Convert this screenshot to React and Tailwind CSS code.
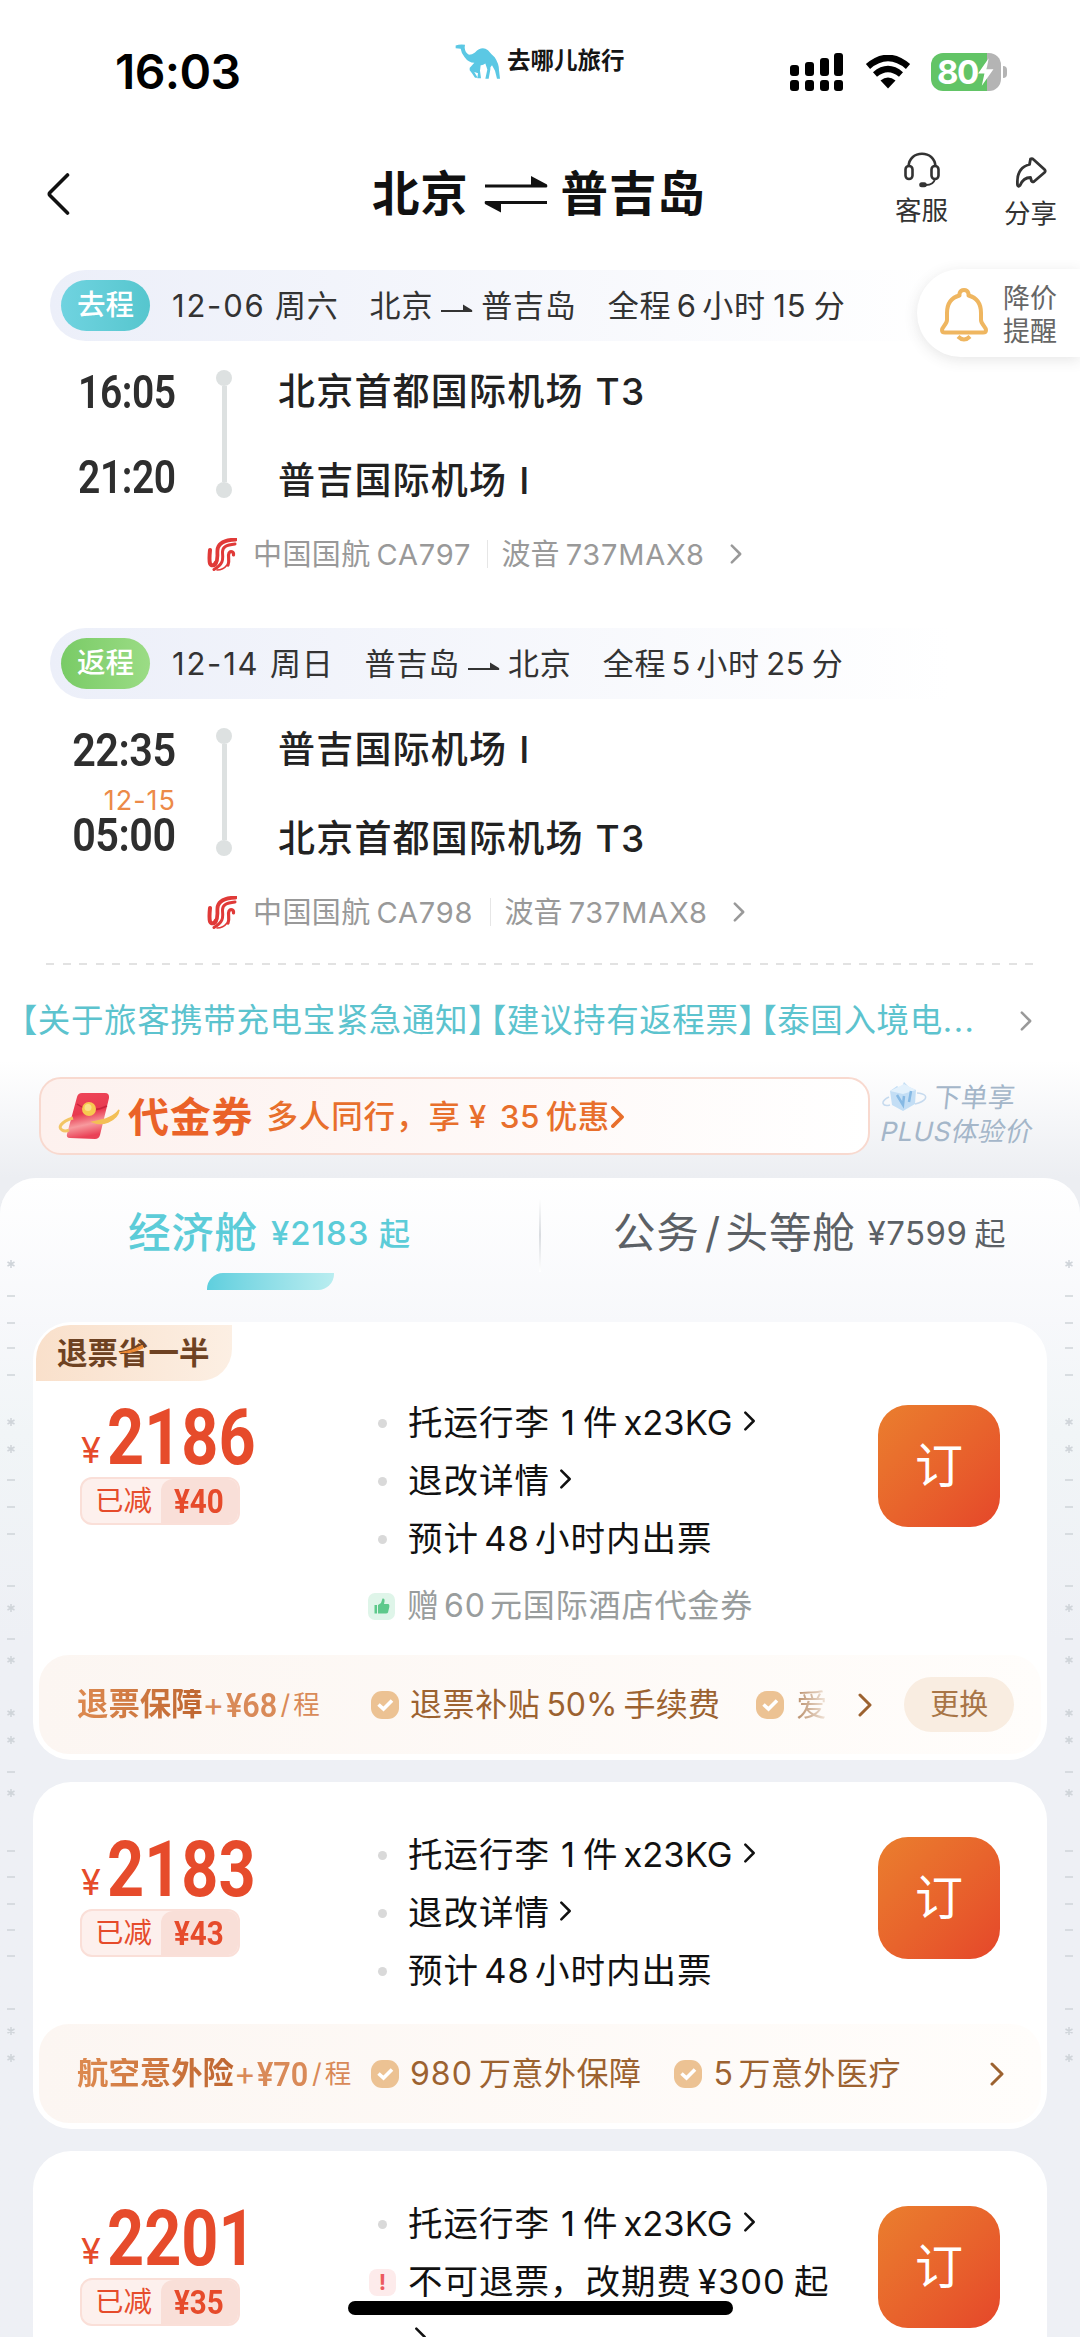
import clsx from 'clsx';

const legs = [
  {
    tag: '去程',
    tagClass: 'from-[#6fd3e0] to-[#56c6ce]',
    date: '12-06',
    dateWidth: 'w-[103px]',
    weekday: '周六',
    from: '北京',
    to: '普吉岛',
    hours: '6',
    hoursWidth: 'w-[31px]',
    minutes: '15',
    minutesWidth: 'w-[48px]',
    depart: '16:05',
    arrive: '21:20',
    timeScale: 'scale-x-[0.83]',
    nextDay: '',
    departAirport: '北京首都国际机场',
    departTerminal: 'T3',
    arriveAirport: '普吉国际机场',
    arriveTerminal: 'I',
    flight: 'CA797',
    flightWidth: 'w-[116px]',
  },
  {
    tag: '返程',
    tagClass: 'from-[#79cb66] to-[#9bdc85]',
    date: '12-14',
    dateWidth: 'w-[98px]',
    weekday: '周日',
    from: '普吉岛',
    to: '北京',
    hours: '5',
    hoursWidth: 'w-[30px]',
    minutes: '25',
    minutesWidth: 'w-[52px]',
    depart: '22:35',
    arrive: '05:00',
    timeScale: 'scale-x-[0.88]',
    nextDay: '12-15',
    departAirport: '普吉国际机场',
    departTerminal: 'I',
    arriveAirport: '北京首都国际机场',
    arriveTerminal: 'T3',
    flight: 'CA798',
    flightWidth: 'w-[119px]',
  },
];

// Small marks running down both edges of the cabin panel, [type, y]
const edgeMarks = [
  ['*', 1264], ['-', 1296], ['-', 1323], ['-', 1348], ['-', 1375], ['*', 1422], ['*', 1449],
  ['-', 1480], ['-', 1507], ['-', 1534], ['-', 1586], ['*', 1608], ['-', 1639], ['*', 1660],
  ['*', 1713], ['*', 1740], ['-', 1772], ['*', 1793], ['-', 1851], ['-', 1877], ['-', 1904],
  ['-', 1930], ['-', 1956], ['-', 2009], ['*', 2031], ['*', 2058],
];

function Chevron({ className, strokeWidth = 3 }) {
  return (
    <svg viewBox="0 0 14 24" fill="none" stroke="currentColor" strokeWidth={strokeWidth} className={clsx('shrink-0', className)}>
      <path d="M2 2l10 10L2 22" strokeLinecap="round" strokeLinejoin="round" />
    </svg>
  );
}

function CamelLogo() {
  return (
    <svg viewBox="0 0 135 104" className="h-[35px] w-[45px]" fill="#5bc8e4">
      <path d="M2 4Q14 0 30 2L29 10Q30 26 42 32Q51 32 60 25Q80 4 99 18Q107 28 119 39Q132 58 132 78L135 104H126L120 80L111 63Q104 68 106 76L101 104H91L97 76L91 58Q83 64 77 63L75 80L78 102H67L69 87L54 82L43 72L58 56Q40 55 29 39Q19 29 17 14Q10 12 2 12Z" />
      <path d="M48 72L57 82L68 101H60L51 87L43 77Z" />
    </svg>
  );
}

function StatusBar() {
  return (
    <div className="flex h-[142px] items-center pt-[2px]">
      <div className="ml-[115px] w-[340px] text-[48px] font-semibold leading-none tracking-[-0.6px] text-black">16:03</div>
      <div className="-mt-[22px] flex w-[335px] items-center">
        <CamelLogo />
        <span className="ml-[7px] text-[23.5px] font-bold leading-none text-[#151515]">去哪儿旅行</span>
      </div>
      <svg viewBox="0 0 54 38" className="h-[38px] w-[54px]" fill="#000">
        <rect x="0" y="12" width="9" height="11" rx="3" />
        <rect x="15" y="9" width="9" height="14" rx="3" />
        <rect x="30" y="5" width="9" height="18" rx="3" />
        <rect x="44" y="0" width="9" height="23" rx="3" />
        <rect x="0" y="27" width="9" height="11" rx="3" />
        <rect x="15" y="27" width="9" height="11" rx="3" />
        <rect x="30" y="27" width="9" height="11" rx="3" />
        <rect x="44" y="27" width="9" height="11" rx="3" />
      </svg>
      <svg viewBox="0 0 46 34" className="ml-[21px] h-[34px] w-[46px]">
        <path d="M3 11.5Q23 -5.5 43 11.5" fill="none" stroke="#000" strokeWidth="6.5" />
        <path d="M10 19.5Q23 8.5 36 19.5" fill="none" stroke="#000" strokeWidth="6.2" />
        <path d="M15.5 25.5Q23 19.5 30.5 25.5L23 33.5Z" fill="#000" />
      </svg>
      <div className="ml-[20px] flex items-center">
        <div className="relative flex h-[38px] w-[70px] items-center overflow-hidden rounded-[12px] bg-gradient-to-r from-[#62c466] from-80% to-[#b4b4b4] to-80%">
          <span className="ml-[6px] text-[33px] font-bold leading-none tracking-[-1.5px] text-white">80</span>
          <svg viewBox="0 0 16 26" className="-ml-px h-[28px] w-[17px] shrink-0" fill="#fff">
            <path d="M11 0L1 14.5H7L4.5 26L15.5 10.5H9Z" />
          </svg>
        </div>
        <div className="ml-[2px] h-[12px] w-[4px] rounded-r-full bg-[#b4b4b4]" />
      </div>
    </div>
  );
}

function Header() {
  return (
    <div className="flex h-[100px] items-center pt-[3px] text-[#111]">
      <svg viewBox="0 0 24 42" className="ml-[46px] h-[42px] w-[24px]" fill="none" stroke="#111" strokeWidth="3.6">
        <path d="M21.5 2L4 19.5Q2.5 21 4 22.5L21.5 40" strokeLinecap="round" />
      </svg>
      <div className="ml-[302px] flex w-[523px] items-center text-[47.5px] font-bold leading-none">
        <span className="tracking-[0.8px]">北京</span>
        <svg viewBox="0 0 64 38" className="ml-[15px] h-[38px] w-[64px]" fill="#111">
          <path d="M1 9.5H47V1L63 9.5Q64 12.5 62 12.5H1Z" />
          <path d="M63 29H17V37.5L1 29Q0 26 2 26H63Z" />
        </svg>
        <span className="ml-[13px] tracking-[0.8px]">普吉岛</span>
      </div>
      <div className="-mt-[11px] flex flex-col items-center">
        <svg viewBox="0 0 36 36" className="h-[36px] w-[36px]" fill="none" stroke="#333" strokeWidth="2.6">
          <path d="M4.5 14.5C5 6 11 1.7 18 1.7S31 6 31.5 14.5" />
          <rect x="1.5" y="14" width="7" height="13" rx="3.5" />
          <rect x="27.5" y="14" width="7" height="13" rx="3.5" />
          <path d="M31 27C30 31 26 33 22 33" strokeWidth="1.8" />
          <rect x="16.5" y="31.5" width="5" height="2.5" rx="1.2" fill="#333" />
        </svg>
        <span className="mt-[9px] text-[26.5px] leading-none text-[#333]">客服</span>
      </div>
      <div className="-mt-[4px] ml-[56px] flex flex-col items-center">
        <svg viewBox="0 0 32 32" className="h-[32px] w-[32px]" fill="none" stroke="#333" strokeWidth="2.8" strokeLinejoin="round">
          <path d="M15.5 2Q17 1 18.5 2.5L29.5 12.5Q31 14 29.5 15.5L19 24.5Q17.5 25.5 16.5 24L15.5 20.5C10 20.5 7 23.5 5 28.5Q3.5 30.5 2.5 28C1.5 16 6.5 9.500 14.5 7.5Z" />
        </svg>
        <span className="mt-[11px] text-[26.5px] leading-none text-[#333]">分享</span>
      </div>
    </div>
  );
}

function PriceAlert() {
  return (
    <div className="absolute right-0 top-[269px] flex h-[88px] w-[163px] items-center rounded-l-full bg-white pt-[4px] shadow-[0_3px_14px_rgba(60,60,60,0.13)]">
      <svg viewBox="0 0 48 54" className="ml-[23px] h-[54px] w-[48px]" fill="none" stroke="#efb660" strokeWidth="4">
        <path d="M19.5 7.5V5.5Q20.5 2 24 2T28.5 5.5V7.5C38 10 41 17 41 25V32C41 36 46 39 46 42Q46 44.5 43 44.5H5Q2 44.5 2 42C2 39 7 36 7 32V25C7 17 10 10 19.5 7.5Z" strokeLinejoin="round" />
        <path d="M18 48.5Q24 54.5 30 48.5" />
      </svg>
      <span className="ml-[15px] w-[60px] text-[27px] leading-[33px] text-[#666]">降价提醒</span>
    </div>
  );
}

function AirlineIcon() {
  return (
    <svg viewBox="0 0 30 33" className="h-[33px] w-[30px]" fill="none" stroke="#e03a38" strokeLinecap="round">
      <path d="M3 12C2.500 17 2 22 3 25.500C4 28 7.500 28 8.500 25" strokeWidth="4" />
      <path d="M28.500 1.500C17 2 11 5 10.500 12C10 18 11.500 21 8.500 26" strokeWidth="3.800" />
      <path d="M28 6C19 7 15.500 9 15.500 14C15.500 20 18 25 7 31.500" strokeWidth="3" />
      <path d="M21 27C23 23 20.500 18 22 15C23.500 12.500 27 13.500 26.500 17" strokeWidth="3.200" />
      <path d="M20 27C17 31 13 32 10 32" strokeWidth="1.600" />
    </svg>
  );
}

function RouteArrow() {
  return (
    <svg viewBox="0 0 32 9" className="mx-[8px] mt-[5px] h-[9px] w-[32px] shrink-0" fill="#333">
      <path d="M0 6H22V0.500L31 6Q32 8 30 8H0Z" />
    </svg>
  );
}

function Leg({ leg }) {
  return (
    <div>
      <div className="ml-[50px] flex h-[71px] w-[900px] items-center rounded-l-full bg-gradient-to-r from-[#eceff9] to-white">
        <div className={clsx('ml-[11px] flex h-[51px] w-[89px] items-center justify-center rounded-full bg-gradient-to-r text-[28.5px] font-medium leading-none text-white', leg.tagClass)}>
          {leg.tag}
        </div>
        <div className="ml-[22px] flex items-center gap-[31px] whitespace-nowrap text-[31px] leading-none tracking-[0.8px] text-[#333]">
          <div className="flex">
            <span className={clsx('tracking-[1.8px]', leg.dateWidth)}>{leg.date}</span>
            <span>{leg.weekday}</span>
          </div>
          <div className="flex items-center">
            <span>{leg.from}</span>
            <RouteArrow />
            <span>{leg.to}</span>
          </div>
          <div className="flex">
            <span>全程</span>
            <span className={clsx('text-center', leg.hoursWidth)}>{leg.hours}</span>
            <span>小时</span>
            <span className={clsx('text-center', leg.minutesWidth)}>{leg.minutes}</span>
            <span>分</span>
          </div>
        </div>
      </div>

      <div className="flex h-[158px] pt-[25px]">
        <div className="flex w-[176px] flex-col items-end font-['Roboto'] text-[47px] font-semibold tracking-[-0.5px] text-[#2e2e2e]">
          <span className={clsx('block h-[51px] origin-right leading-[51px]', leg.timeScale)}>{leg.depart}</span>
          <span className="mt-[16px] block h-[20px] font-['Inter'] text-[27px] font-normal leading-[20px] tracking-[1px] text-[#ec8a48]">{leg.nextDay}</span>
          <span className={clsx('block h-[46px] origin-right leading-[48px]', leg.timeScale)}>{leg.arrive}</span>
        </div>
        <div className="ml-[40px] mt-[4px] flex h-[128px] w-[16px] flex-col items-center">
          <i className="h-[16px] w-[16px] rounded-full bg-[#dde1e1]" />
          <i className="w-[5px] flex-1 bg-[#dde1e1]" />
          <i className="h-[16px] w-[16px] rounded-full bg-[#dde1e1]" />
        </div>
        <div className="ml-[46px] text-[37px] font-medium leading-[51px] tracking-[1.2px] text-[#222]">
          <div className="flex gap-[12px]">
            <span>{leg.departAirport}</span>
            <span>{leg.departTerminal}</span>
          </div>
          <div className="mt-[38px] flex gap-[12px]">
            <span>{leg.arriveAirport}</span>
            <span>{leg.arriveTerminal}</span>
          </div>
        </div>
      </div>

      <div className="mt-[38px] flex h-[34px] items-center whitespace-nowrap text-[29px] leading-none text-[#999]">
        <div className="ml-[207px]">
          <AirlineIcon />
        </div>
        <span className="ml-[16px] tracking-[0.4px]">中国国航</span>
        <span className={clsx('pl-[6px] tracking-[0.8px]', leg.flightWidth)}>{leg.flight}</span>
        <i className="h-[28px] w-px bg-[#e6e6e6]" />
        <span className="ml-[14px]">波音</span>
        <span className="ml-[6px] w-[164px] tracking-[0.8px]">737MAX8</span>
        <Chevron className="h-[20px] w-[12px]" />
      </div>
    </div>
  );
}

function Notice() {
  return (
    <div className="mt-[30px] flex h-[50px] items-center">
      <div className="ml-[21px] w-[999px] whitespace-nowrap text-[32.5px] leading-none text-[#5cc3ce]">
        <span className="tracking-[0.6px] [font-feature-settings:'halt']">【关于旅客携带充电宝紧急通知】</span>
        <span className="ml-[5px] tracking-[0.6px] [font-feature-settings:'halt']">【建议持有返程票】</span>
        <span className="ml-[5px] tracking-[0.6px] [font-feature-settings:'halt']">【泰国入境电</span>
        <span className="tracking-[1.5px]">...</span>
      </div>
      <Chevron className="h-[20px] w-[12px] text-[#999]" />
    </div>
  );
}

function VoucherIcon() {
  return (
    <svg viewBox="0 0 62 48" className="h-[48px] w-[62px]">
      <defs>
        <linearGradient id="packet" x1="0" y1="0" x2="0.2" y2="1">
          <stop offset="0" stopColor="#ef4658" />
          <stop offset="0.5" stopColor="#e83a50" />
          <stop offset="0.75" stopColor="#f79a9e" />
          <stop offset="1" stopColor="#ea4257" />
        </linearGradient>
      </defs>
      <path d="M24 1H47Q51.5 1 51 6L42 43Q41 47 37 47L12 46Q8 46 9 42L19 5Q20 1 24 1Z" fill="url(#packet)" />
      <path d="M19 12Q33 22 49 14" fill="none" stroke="#c9243c" strokeWidth="1.5" />
      <path d="M15 26C2 30 0 36 4 38Q7 40 11 38" fill="none" stroke="#f3c565" strokeWidth="3" />
      <path d="M35 30Q55 27 61 18Q60 26 50 30Q42 33 35 30Z" fill="#f3bf55" stroke="#f3bf55" strokeWidth="1.5" />
      <circle cx="31" cy="17" r="7" fill="#f7c94f" />
      <circle cx="30" cy="15.5" r="3.5" fill="#fbe08a" />
    </svg>
  );
}

function VoucherRow() {
  return (
    <div className="mt-[31px] flex h-[78px]">
      <div className="ml-[39px] flex w-[831px] items-center whitespace-nowrap rounded-[22px] border-2 border-[#f8d9cf] bg-gradient-to-r from-[#fdf1ee] to-white leading-none">
        <div className="ml-[17px]">
          <VoucherIcon />
        </div>
        <span className="ml-[8px] mt-[2px] text-[41px] font-bold tracking-[0.8px] text-[#ea6228]">代金券</span>
        <div className="ml-[13px] mt-[2px] flex items-center text-[31.5px] font-medium text-[#e86f2c]">
          <span className="tracking-[0.9px]">多人同行，享</span>
          <span className="w-[38px] pl-[8px]">¥</span>
          <span className="w-[47px] pl-[1px] tracking-[0.5px]">35</span>
          <span className="tracking-[0.5px]">优惠</span>
          <Chevron className="ml-[1px] h-[22px] w-[13px]" strokeWidth={4} />
        </div>
      </div>
      <div className="ml-[11px] flex flex-col whitespace-nowrap leading-none text-[#a4b6c9]">
        <div className="mt-[5px] flex items-center">
          <svg viewBox="0 0 46 30" className="h-[30px] w-[46px]">
            <path d="M9 9L16 4L20 7L23 0L28 5L35 8L34 22L22 29L11 23Z" fill="#c3def5" />
            <path d="M9 9L22 12L35 8L23 2Z" fill="#e3f1fc" />
            <path d="M16 13L22 23L23 14M30 9L28 20" fill="none" stroke="#86b9e4" strokeWidth="2.500" />
            <path d="M8 15C-2 20 2 25 9 23M36 11Q47 12 44 17Q42 20 34 22" fill="none" stroke="#c6daee" strokeWidth="1.5" />
          </svg>
          <span className="ml-[7px] -skew-x-6 text-[27px]">下单享</span>
        </div>
        <span className="mt-[6px] origin-left -skew-x-12 text-[26.5px] tracking-[0.6px]">PLUS体验价</span>
      </div>
    </div>
  );
}

function CabinTabs() {
  return (
    <div className="flex h-[144px] whitespace-nowrap rounded-t-[36px] bg-gradient-to-b from-white to-[#f7f8fb]">
      <div className="w-[539px]">
        <div className="ml-[128px] mt-[30px] flex h-[50px] items-center font-medium leading-none text-[#5cccd8]">
          <span className="text-[42.5px] tracking-[0.8px]">经济舱</span>
          <span className="ml-[13px] w-[108px] text-[33px] tracking-[0.9px]">¥2183</span>
          <span className="text-[31px]">起</span>
        </div>
        <div className="ml-[207px] mt-[15px] h-[17px] w-[127px] rounded-br-[16px] rounded-tl-[16px] bg-gradient-to-r from-[#5ecfde] to-[#b9edf0]" />
      </div>
      <i className="mt-[20px] h-[74px] w-[2px] bg-gradient-to-b from-white via-[#d9dce0] to-white" />
      <div className="ml-[72px] mt-[30px] flex h-[50px] items-center leading-none text-[#5b6065]">
        <span className="text-[42.5px] tracking-[0.8px]">公务</span>
        <span className="w-[26px] text-center text-[42px]">/</span>
        <span className="text-[42.5px] tracking-[0.8px]">头等舱</span>
        <span className="ml-[12px] w-[107px] text-[33px] tracking-[0.5px]">¥7599</span>
        <span className="text-[31px]">起</span>
      </div>
    </div>
  );
}

function Price({ value, discount }) {
  return (
    <div className="w-[290px] shrink-0">
      <div className="ml-[48px] flex h-[56px] items-end text-[#e64b2b]">
        <span className="w-[26px] text-[36px] leading-[28px]">¥</span>
        <span className="block h-[56px] origin-left scale-x-[0.83] font-['Roboto'] text-[78px] font-bold leading-[60px]">{value}</span>
      </div>
      <div className="ml-[47px] mt-[13px] flex h-[48px] w-[160px] items-center overflow-hidden rounded-[12px] border-2 border-[#fadfd8] bg-[#fdf0ed] leading-none text-[#e64b2b]">
        <span className="ml-[13px] w-[66px] text-[28.5px]">已减</span>
        <span className="flex h-full flex-1 items-center rounded-tl-[12px] bg-[#f9dfd8] pl-[13px] font-['Roboto'] text-[34px] font-bold">
          <span className="block origin-left scale-x-[0.87] whitespace-nowrap">¥{discount}</span>
        </span>
      </div>
    </div>
  );
}

function DetailRow({ icon, children }) {
  return (
    <div className="flex h-[58px] items-center">
      <span className="flex w-[51px] justify-center">{icon || <i className="h-[9px] w-[9px] rounded-full bg-[#d9d9d9]" />}</span>
      {children}
    </div>
  );
}

function BaggageRow() {
  return (
    <DetailRow>
      <span>托运行李</span>
      <span className="w-[33px] pl-[11px]">1</span>
      <span>件</span>
      <span className="ml-[5px] w-[119px] tracking-[0px]">x23KG</span>
      <Chevron className="-mt-[4px] h-[20px] w-[13px]" />
    </DetailRow>
  );
}

function RefundRow() {
  return (
    <DetailRow>
      <span>退改详情</span>
      <Chevron className="-mt-[4px] ml-[9px] h-[20px] w-[13px]" />
    </DetailRow>
  );
}

function IssueRow() {
  return (
    <DetailRow>
      <span>预计</span>
      <span className="w-[56px] text-center">48</span>
      <span>小时内出票</span>
    </DetailRow>
  );
}

function BookButton() {
  return (
    <button className="mt-[-3px] flex h-[122px] w-[122px] items-center justify-center rounded-[30px] bg-gradient-to-br from-[#ea7e2e] to-[#e5462a] text-[48px] leading-none text-white">
      订
    </button>
  );
}

function Check() {
  return (
    <svg viewBox="0 0 28 28" className="h-[28px] w-[28px] shrink-0">
      <rect width="28" height="28" rx="11" fill="#ecc293" />
      <path d="M7.5 13.5L12.5 18L21 9.5" fill="none" stroke="#fff" strokeWidth="3.6" />
    </svg>
  );
}

function Insurance({ name, price, children }) {
  return (
    <div className="mx-[6px] mb-[6px] flex h-[99px] items-center whitespace-nowrap rounded-[30px] bg-gradient-to-r from-[#fcf6f2] to-[#fffdfb] text-[32px] leading-none text-[#9c6230]">
      <div className="ml-[38px] flex w-[294px] items-center text-[#d98a58]">
        <span className="bg-gradient-to-r from-[#dd8a50] to-[#bf6630] bg-clip-text text-[31.4px] font-bold text-transparent">{name}</span>
        <span className="w-[23px] text-[33px]">+</span>
        <span className="block w-[53px] font-['Roboto'] text-[34px] font-semibold">
          <span className="block origin-left scale-x-[0.9]">¥{price}</span>
        </span>
        <span className="ml-[2px] text-[27px]">/</span>
        <span className="ml-[3px] text-[26.5px]">程</span>
      </div>
      {children}
    </div>
  );
}

function FareCard({ className, price, discount, details, children }) {
  return (
    <div className={clsx('mx-[33px] flex flex-col overflow-hidden rounded-[38px] bg-white', className)}>
      <div className="flex flex-1">
        <Price value={price} discount={discount} />
        <div className="-mt-[14px] ml-[34px] w-[521px] whitespace-nowrap text-[34.5px] leading-none tracking-[1px] text-[#111]">{details}</div>
        <BookButton />
      </div>
      {children}
    </div>
  );
}

function EdgeMarks({ className }) {
  return (
    <svg viewBox="0 0 10 820" className={clsx('absolute top-[1250px] h-[820px] w-[10px]', className)} stroke="#cfd4d9" strokeWidth="1.5">
      {edgeMarks.map(([type, y]) => (
        <path
          key={y}
          transform={`translate(5 ${y - 1250})`}
          d={type === '*' ? 'M0 -4V4M-3.5 -2L3.5 2M-3.5 2L3.5 -2' : 'M-4 0H4'}
        />
      ))}
    </svg>
  );
}

export default function App() {
  return (
    <div className="relative h-[2337px] w-[1080px] overflow-hidden bg-white font-['Inter','Noto_Sans_CJK_SC',sans-serif]">
      <StatusBar />
      <Header />

      <div className="mt-[28px] flex flex-col gap-[57px]">
        {legs.map((leg) => (
          <Leg key={leg.tag} leg={leg} />
        ))}
      </div>
      <PriceAlert />

      <div className="mx-[46px] mt-[34px] h-[2px] bg-[repeating-linear-gradient(90deg,#e2e2e2_0_8px,transparent_8px_16.6px)]" />

      <div className="h-[213px] bg-gradient-to-b from-white from-45% to-[#eceef2] pt-px">
        <Notice />
        <VoucherRow />
      </div>

      {/* Cabin panel */}
      <div className="bg-[#eceef2]">
        <div className="h-[1159px] rounded-t-[36px] bg-gradient-to-b from-[#f7f8fb] from-12% via-[#f1f5f7] via-22% to-[#eef0f5] to-40%">
          <CabinTabs />

          <FareCard
            className="relative h-[438px] pt-[86px]"
            price="2186"
            discount="40"
            details={
              <>
                <BaggageRow />
                <RefundRow />
                <IssueRow />
                <div className="mt-[10px] flex h-[56px] items-center text-[32px] tracking-[0.9px] text-[#999d9d]">
                  <span className="ml-[11px] mr-[12px] flex h-[27px] w-[27px] items-center justify-center rounded-[7px] bg-[#dff5e9]">
                    <svg viewBox="0 0 16 16" className="h-[16px] w-[16px]" fill="#5ec98b">
                      <path d="M0.5 7H3V15.5H0.5ZM4 7L7 5L8.5 0.5Q11 0 10.5 3.5L10 6H14.5Q15.7 6.5 15.3 9L14 14.5Q13.5 15.5 12 15.5H4Z" />
                    </svg>
                  </span>
                  <span>赠</span>
                  <span className="w-[50px] text-center">60</span>
                  <span>元国际酒店代金券</span>
                </div>
              </>
            }
          >
            <div className="absolute left-[3px] top-[3px] flex h-[56px] w-[196px] items-center rounded-br-[32px] rounded-tl-[34px] bg-gradient-to-r from-[#f9e0cb] to-[#fcefe3] pl-[21px] text-[30.5px] font-bold leading-none text-[#6e4222]">
              <span className="relative">
                退票省一半
                <svg viewBox="0 0 24 8" className="absolute left-[62px] top-[7px] h-[8px] w-[24px]">
                  <path d="M0 8Q14 6 24 0V3Q12 9 0 8Z" fill="#ef8b35" stroke="#ef8b35" strokeWidth="1" />
                </svg>
              </span>
            </div>
            <Insurance name="退票保障" price="68">
              <Check />
              <span className="ml-[11px] tracking-[0.6px]">退票补贴</span>
              <span className="w-[83px] text-center">50%</span>
              <span className="tracking-[0.3px]">手续费</span>
              <div className="ml-[36px]">
                <Check />
              </div>
              <span className="ml-[12px] w-[62px]">
                <span className="bg-gradient-to-r from-[#b78c67] to-[#f3e8de] bg-clip-text text-[31px] text-transparent">爱</span>
              </span>
              <Chevron className="h-[24px] w-[14px]" />
              <span className="ml-[32px] flex h-[55px] w-[110px] items-center justify-center rounded-full bg-[#f9ede1] text-[29px] text-[#a87546]">更换</span>
            </Insurance>
          </FareCard>

          <FareCard
            className="mt-[22px] h-[347px] pt-[58px]"
            price="2183"
            discount="43"
            details={
              <>
                <BaggageRow />
                <RefundRow />
                <IssueRow />
              </>
            }
          >
            <Insurance name="航空意外险" price="70">
              <Check />
              <span className="w-[80px] pl-[11px] tracking-[1px]">980</span>
              <span className="tracking-[0.5px]">万意外保障</span>
              <div className="ml-[32px]">
                <Check />
              </div>
              <span className="w-[37px] pl-[12px]">5</span>
              <span className="w-[251px] tracking-[0.5px]">万意外医疗</span>
              <Chevron className="h-[24px] w-[14px]" />
            </Insurance>
          </FareCard>

          <FareCard
            className="mt-[22px] h-[347px] pt-[58px]"
            price="2201"
            discount="35"
            details={
              <>
                <BaggageRow />
                <DetailRow
                  icon={
                    <i className="flex h-[27px] w-[27px] items-center justify-center rounded-[8px] bg-[#fdebeb] text-[22px] font-bold not-italic leading-none tracking-normal text-[#ec5a5f]">!</i>
                  }
                >
                  <span>不可退票，改期费</span>
                  <span className="w-[102px] pl-[6px]">¥300</span>
                  <span>起</span>
                </DetailRow>
                <Chevron className="ml-[57px] mt-[16px] h-[20px] w-[13px]" />
              </>
            }
          />
        </div>
      </div>

      <EdgeMarks className="left-[6px]" />
      <EdgeMarks className="right-[6px]" />
      <div className="absolute bottom-[22px] left-[348px] h-[14px] w-[385px] rounded-full bg-black" />
    </div>
  );
}
